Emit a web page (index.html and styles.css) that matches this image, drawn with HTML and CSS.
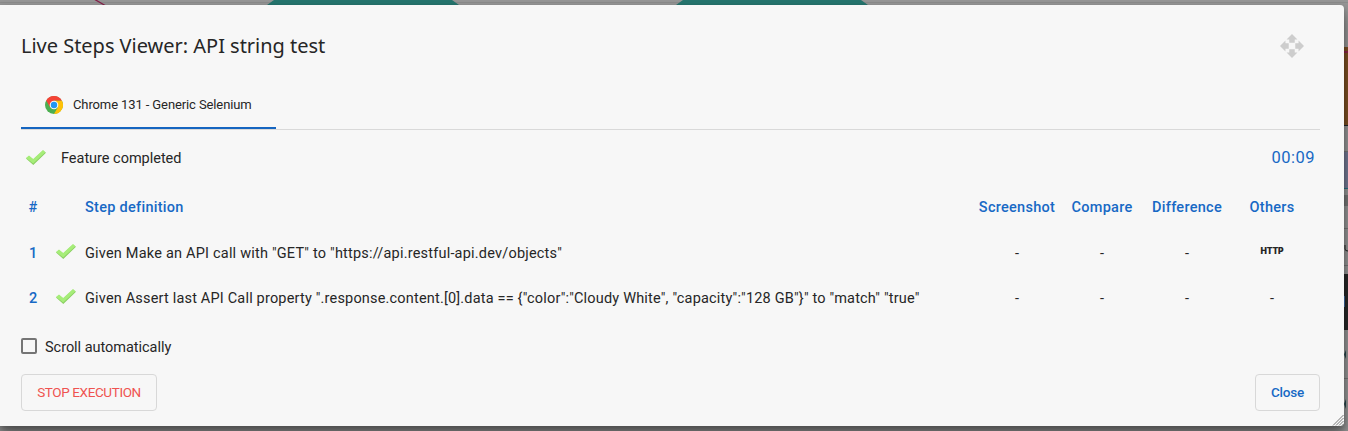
FILE: index.html
```html
<!DOCTYPE html>
<html lang="en">
<head>
<meta charset="utf-8">
<title>Live Steps Viewer</title>
<link rel="stylesheet" href="styles.css">
</head>
<body>
<svg class="backdrop" width="1348" height="431" viewBox="0 0 1348 431" aria-hidden="true">
  <path fill="#8c8c8c" d="M0 2h1348v1H0z"/>
  <path d="M94-1l12 7" stroke="#86204a" stroke-width="1.3"/>
  <path fill="#26756e" d="M274 0h178l7 5H267zM683 0h178l7 5H676z"/>
  <path fill="#7d4f22" d="M1344 47h4v78h-4z"/>
  <path fill="#8b2447" d="M1344 51h4v2h-4z"/>
  <path fill="#20272b" d="M1344 125h4v1h-4z"/>
  <path fill="#747994" d="M1344 152h4v37h-4z"/>
  <path fill="#286f83" d="M1344 188h4v1h-4z"/>
  <path fill="#777" d="M1344 151h4v1h-4zM1344 195h4v11h-4zM1344 228h4v1h-4zM1344 265h4v1h-4zM1344 378h4v1h-4z"/>
  <path d="M1345 245v4q0 2 3 2" fill="none" stroke="#222"/>
  <path fill="#292929" d="M1344 274h4v56h-4z"/>
  <path fill="#426da8" d="M1344 296h1v11h-1z"/>
  <path fill="#29474d" d="M1346 350v9l-2-4.500zM1346 399v10l-2-5z"/>
</svg>
<main class="dialog">
  <header class="head">
    <h1 class="title">Live Steps Viewer: API string test</h1>
    <svg class="move" width="24" height="24" viewBox="1 1 22 22"><path fill="#cdcdcd" d="M9.500 9h5V6H17l-5-5-5 5h2.500zM9 9.500H6V7l-5 5 5 5v-2.500h3zM23 12l-5-5v2.500h-3v5h3V17zM14.500 15h-5v3H7l5 5 5-5h-2.500z"/></svg>
  </header>
  <nav class="tabs">
    <div class="tab">
      <svg width="18" height="18" viewBox="0 0 48 48"><circle cx="24" cy="24" r="24" fill="#4caf50"/><path fill="#ffc107" d="M24 12h20.800A24 24 0 0 1 24 48l10.400-18z"/><path fill="#f44336" d="M3.200 12A24 24 0 0 1 44.800 12H24L13.600 30z"/><circle cx="24" cy="24" r="11.500" fill="#f7f7f7"/><circle cx="24" cy="24" r="8.500" fill="#2196f3"/></svg>
      <span class="tab-label">Chrome 131 - Generic Selenium</span>
    </div>
  </nav>
  <section class="status">
    <svg class="check" width="20" height="16" viewBox="0 0 20 16"><path fill="#8bcf63" d="M0 8.500l3-2.500 4.200 3.500L17 .5l3 2.200L7.300 15z"/><path fill="#a6ed79" d="M0 8l3-2.500L7.200 9 17 0l2.400 2.200L7.200 13.500z"/></svg>
    <span class="status-text">Feature completed</span>
    <span class="time">00:09</span>
  </section>
  <section class="steps">
    <div class="row row-head">
      <span class="num">#</span><span></span><span>Step definition</span>
      <span class="cell">Screenshot</span><span class="cell">Compare</span><span class="cell">Difference</span><span class="cell">Others</span>
    </div>
    <div class="row row-step">
      <span class="num">1</span>
      <svg class="check" width="20" height="16" viewBox="0 0 20 16"><path fill="#8bcf63" d="M0 8.500l3-2.500 4.200 3.500L17 .5l3 2.200L7.300 15z"/><path fill="#a6ed79" d="M0 8l3-2.500L7.200 9 17 0l2.400 2.200L7.200 13.500z"/></svg>
      <span class="step">Given Make an API call with "GET" to "https://api.restful-api.dev/objects"</span>
      <span class="cell">-</span><span class="cell">-</span><span class="cell">-</span><span class="cell http">HTTP</span>
    </div>
    <div class="row row-step">
      <span class="num">2</span>
      <svg class="check" width="20" height="16" viewBox="0 0 20 16"><path fill="#8bcf63" d="M0 8.500l3-2.500 4.200 3.500L17 .5l3 2.200L7.300 15z"/><path fill="#a6ed79" d="M0 8l3-2.500L7.200 9 17 0l2.400 2.200L7.200 13.500z"/></svg>
      <span class="step step-long">Given Assert last API Call property ".response.content.[0].data == {"color":"Cloudy White", "capacity":"128 GB"}" to "match" "true"</span>
      <span class="cell">-</span><span class="cell">-</span><span class="cell">-</span><span class="cell">-</span>
    </div>
  </section>
  <div class="auto"><span class="box"></span><span class="auto-label">Scroll automatically</span></div>
  <footer class="foot">
    <button class="btn stop">STOP EXECUTION</button>
    <button class="btn close">Close</button>
  </footer>
  <svg class="grip" width="12" height="12" viewBox="0 0 12 12"><path d="M1 11.500L11.500 1M4 11.500L11.500 4M7 11.500L11.500 7M10 11.500l1.500-1.500" stroke="#777" stroke-width="1" fill="none"/></svg>
</main>
</body>
</html>
```
FILE: styles.css
```css
* { box-sizing: border-box; }
body {
  margin: 0;
  height: 431px;
  padding-top: 5px;
  overflow: hidden;
  background: #969696;
  color: #262626;
  font: 14.5px/20px Roboto, "Liberation Sans", sans-serif;
}
.backdrop { position: absolute; left: 0; top: 0; }
.dialog {
  position: relative;
  width: 1344px;
  height: 421px;
  padding: 0 24px 0 21px;
  background: #f7f7f7;
  border-radius: 0 4px 4px 0;
  box-shadow: 0 10px 14px rgba(0, 0, 0, .35), 0 3px 6px rgba(0, 0, 0, .25);
}
.head { height: 82px; display: flex; justify-content: space-between; align-items: center; padding-right: 16px; }
.title { margin: 0; font: 400 20px/28px "Noto Sans", sans-serif; letter-spacing: -.02px; }
.tabs { height: 43px; border-bottom: 1px solid #d9d9d9; display: flex; width: 1299px; }
.tab { width: 255px; height: 42px; border-bottom: 2px solid #1565c0; display: flex; align-items: center; gap: 10px; padding: 0 0 5px 24px; }
.tab-label { font-size: 13px; letter-spacing: -.11px; white-space: nowrap; }
.status { height: 55px; display: flex; align-items: center; padding-left: 5px; }
.status-text { margin-left: 15px; padding-top: 2px; letter-spacing: -.02px; }
.time { margin-left: auto; margin-right: 5px; font-size: 16.5px; letter-spacing: .5px; color: #1769c5; }
.row { display: grid; grid-template-columns: 24px 40px 889.5px repeat(4, 85px); align-items: center; height: 45px; white-space: nowrap; }
.row-head { color: #1769c5; font-weight: 500; letter-spacing: .28px; }
.row-step { padding-top: 2px; }
.row .check { margin-left: 11px; margin-bottom: 3px; }
.num { text-align: center; color: #1769c5; font-weight: 500; }
.step { letter-spacing: .205px; }
.step-long { letter-spacing: .182px; }
.cell { text-align: center; }
.http { font: 900 8.5px/10px Inter, sans-serif; padding-bottom: 6px; letter-spacing: -.15px; }
.auto { height: 54px; display: flex; align-items: center; gap: 8px; }
.auto-label { padding-top: 2px; letter-spacing: -.03px; }
.box { width: 16px; height: 16px; margin-bottom: 2px; border: 2px solid #757575; border-radius: 2px; }
.foot { display: flex; justify-content: space-between; width: 1299px; }
.btn { height: 37px; border: 1px solid #d8d8d8; border-radius: 4px; background: transparent; font: 13.5px/20px Roboto, sans-serif; padding: 0 0 1px; white-space: nowrap; }
.stop { width: 136px; color: #ef5350; letter-spacing: -.38px; }
.close { width: 65px; color: #1769c5; font-weight: 500; letter-spacing: -.2px; }
.grip { position: absolute; right: 0; bottom: 0; }
```
